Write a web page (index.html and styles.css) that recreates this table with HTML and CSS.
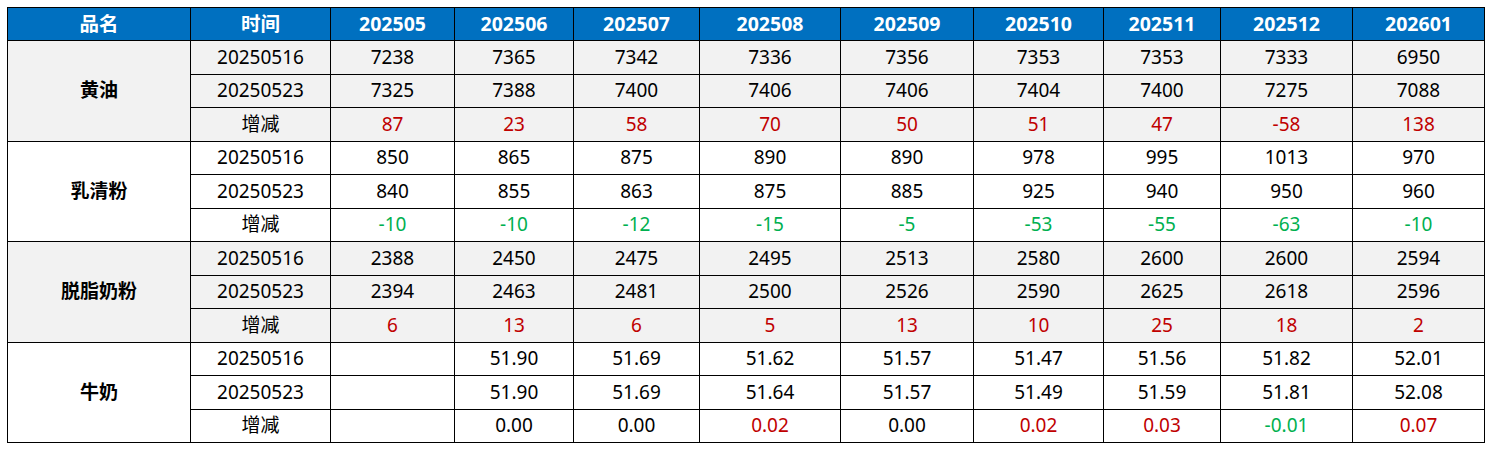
FILE: index.html
```html
<!DOCTYPE html>
<html lang="zh">
<head>
<meta charset="utf-8">
<title>乳制品价格</title>
<link rel="stylesheet" href="styles.css">
</head>
<body>
<table class="price-table">
  <colgroup>
    <col class="c-name"><col class="c-date">
    <col class="c-m1"><col class="c-m2"><col class="c-m3"><col class="c-m4"><col class="c-m5">
    <col class="c-m6"><col class="c-m7"><col class="c-m8"><col class="c-m9">
  </colgroup>
  <thead>
    <tr class="head-row">
      <th>品名</th><th>时间</th><th>202505</th><th>202506</th><th>202507</th><th>202508</th><th>202509</th><th>202510</th><th>202511</th><th>202512</th><th>202601</th>
    </tr>
  </thead>
  <tbody class="group shaded">
    <tr><td class="name" rowspan="3">黄油</td><td>20250516</td><td>7238</td><td>7365</td><td>7342</td><td>7336</td><td>7356</td><td>7353</td><td>7353</td><td>7333</td><td>6950</td></tr>
    <tr><td>20250523</td><td>7325</td><td>7388</td><td>7400</td><td>7406</td><td>7406</td><td>7404</td><td>7400</td><td>7275</td><td>7088</td></tr>
    <tr><td>增减</td><td class="up">87</td><td class="up">23</td><td class="up">58</td><td class="up">70</td><td class="up">50</td><td class="up">51</td><td class="up">47</td><td class="up">-58</td><td class="up">138</td></tr>
  </tbody>
  <tbody class="group">
    <tr><td class="name" rowspan="3">乳清粉</td><td>20250516</td><td>850</td><td>865</td><td>875</td><td>890</td><td>890</td><td>978</td><td>995</td><td>1013</td><td>970</td></tr>
    <tr><td>20250523</td><td>840</td><td>855</td><td>863</td><td>875</td><td>885</td><td>925</td><td>940</td><td>950</td><td>960</td></tr>
    <tr><td>增减</td><td class="down">-10</td><td class="down">-10</td><td class="down">-12</td><td class="down">-15</td><td class="down">-5</td><td class="down">-53</td><td class="down">-55</td><td class="down">-63</td><td class="down">-10</td></tr>
  </tbody>
  <tbody class="group shaded">
    <tr><td class="name" rowspan="3">脱脂奶粉</td><td>20250516</td><td>2388</td><td>2450</td><td>2475</td><td>2495</td><td>2513</td><td>2580</td><td>2600</td><td>2600</td><td>2594</td></tr>
    <tr><td>20250523</td><td>2394</td><td>2463</td><td>2481</td><td>2500</td><td>2526</td><td>2590</td><td>2625</td><td>2618</td><td>2596</td></tr>
    <tr><td>增减</td><td class="up">6</td><td class="up">13</td><td class="up">6</td><td class="up">5</td><td class="up">13</td><td class="up">10</td><td class="up">25</td><td class="up">18</td><td class="up">2</td></tr>
  </tbody>
  <tbody class="group">
    <tr><td class="name" rowspan="3">牛奶</td><td>20250516</td><td></td><td>51.90</td><td>51.69</td><td>51.62</td><td>51.57</td><td>51.47</td><td>51.56</td><td>51.82</td><td>52.01</td></tr>
    <tr><td>20250523</td><td></td><td>51.90</td><td>51.69</td><td>51.64</td><td>51.57</td><td>51.49</td><td>51.59</td><td>51.81</td><td>52.08</td></tr>
    <tr><td>增减</td><td></td><td>0.00</td><td>0.00</td><td class="up">0.02</td><td>0.00</td><td class="up">0.02</td><td class="up">0.03</td><td class="down">-0.01</td><td class="up">0.07</td></tr>
  </tbody>
</table>
</body>
</html>
```

FILE: styles.css
```css
html, body {
  margin: 0;
  padding: 0;
  background: #ffffff;
}

body {
  padding: 7px;
  font-family: "Noto Sans", "Noto Sans CJK SC", sans-serif;
}

.price-table {
  border-collapse: collapse;
  table-layout: fixed;
  width: 1477px;
  font-size: 19px;
  color: #000000;
}

.c-name { width: 183px; }
.c-date { width: 140px; }
.c-m1 { width: 124px; }
.c-m2 { width: 119px; }
.c-m3 { width: 126px; }
.c-m4 { width: 141px; }
.c-m5 { width: 133px; }
.c-m6 { width: 130px; }
.c-m7 { width: 117px; }
.c-m8 { width: 132px; }
.c-m9 { width: 132px; }

.price-table th,
.price-table td {
  border: 1px solid #000000;
  padding: 0;
  text-align: center;
  vertical-align: middle;
  line-height: 1;
  white-space: nowrap;
}

.head-row th {
  height: 32px;
  background: #0070c0;
  color: #ffffff;
  font-weight: 700;
  font-size: 19.5px;
}

.price-table tbody td {
  height: 32.5px;
}

.group.shaded td {
  background: #f2f2f2;
}

.name {
  font-weight: 700;
}

.up {
  color: #c00000;
}

.down {
  color: #00b050;
}
```
